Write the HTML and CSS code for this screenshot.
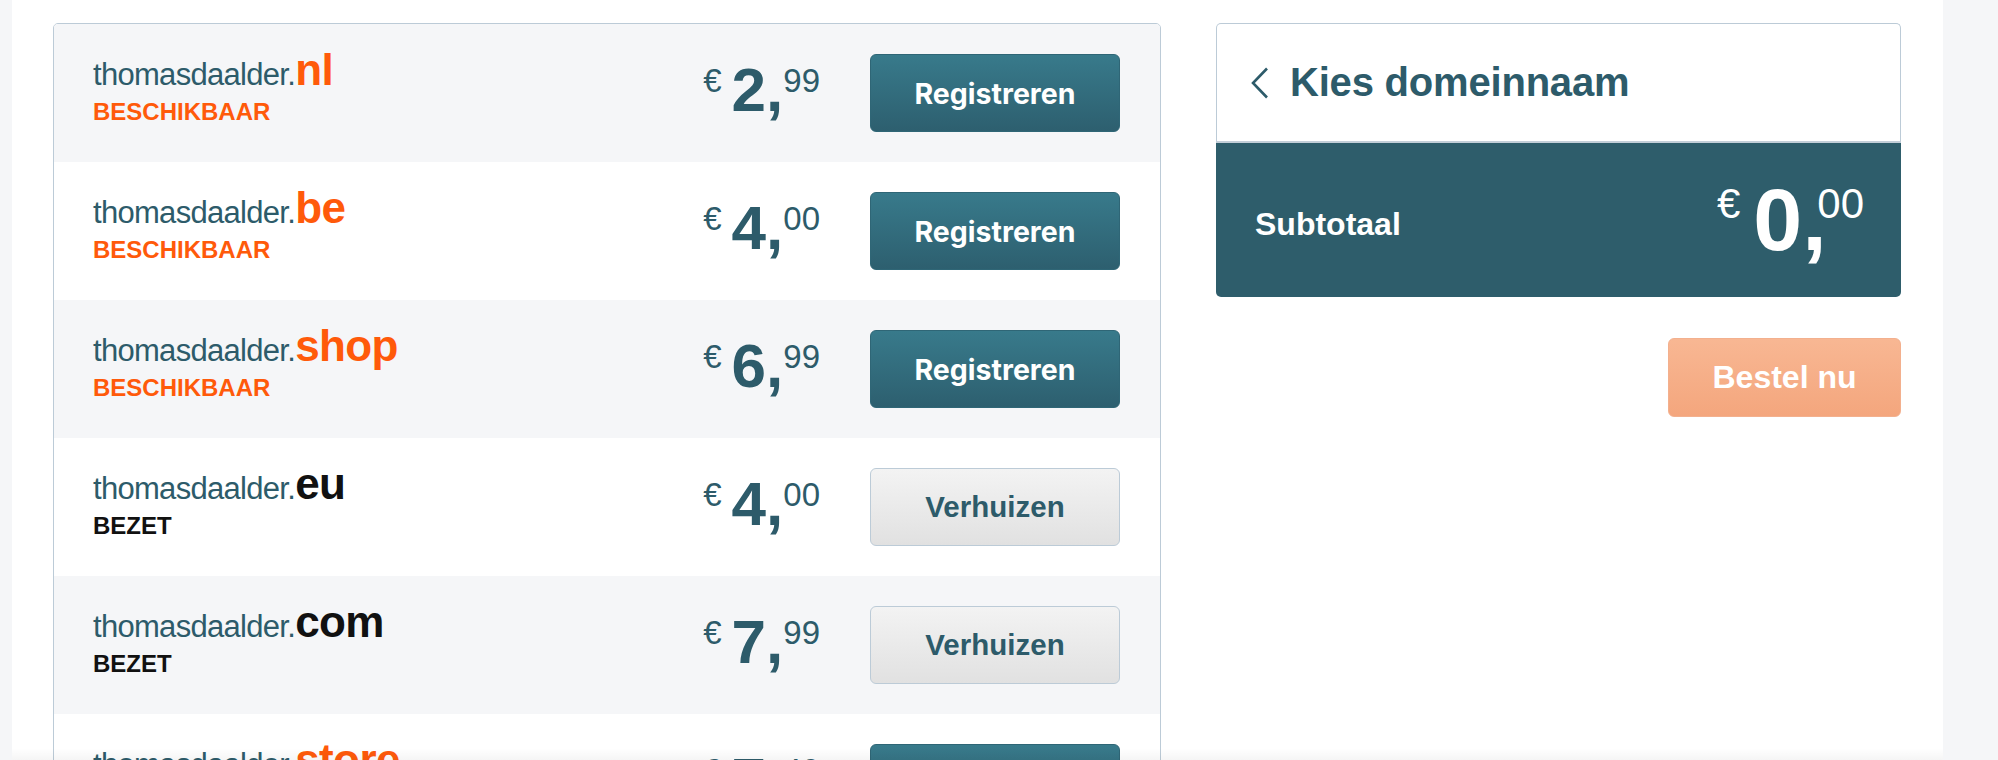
FILE: index.html
```html
<!DOCTYPE html>
<html lang="nl">
<head>
<meta charset="utf-8">
<title>Kies domeinnaam</title>
<link rel="stylesheet" href="styles.css">
</head>
<body>
<div class="page">
  <div class="main">
    <div class="content">
      <div class="domains">
        <div class="row alt">
          <div class="name"><div class="domain">thomasdaalder.<span class="tld free">nl</span></div><div class="status free">BESCHIKBAAR</div></div>
          <div class="price"><span class="cur">€</span><span class="int">2,</span><span class="dec">99</span></div>
          <button class="btn primary">Registreren</button>
        </div>
        <div class="row">
          <div class="name"><div class="domain">thomasdaalder.<span class="tld free">be</span></div><div class="status free">BESCHIKBAAR</div></div>
          <div class="price"><span class="cur">€</span><span class="int">4,</span><span class="dec">00</span></div>
          <button class="btn primary">Registreren</button>
        </div>
        <div class="row alt">
          <div class="name"><div class="domain">thomasdaalder.<span class="tld free">shop</span></div><div class="status free">BESCHIKBAAR</div></div>
          <div class="price"><span class="cur">€</span><span class="int">6,</span><span class="dec">99</span></div>
          <button class="btn primary">Registreren</button>
        </div>
        <div class="row">
          <div class="name"><div class="domain">thomasdaalder.<span class="tld taken">eu</span></div><div class="status taken">BEZET</div></div>
          <div class="price"><span class="cur">€</span><span class="int">4,</span><span class="dec">00</span></div>
          <button class="btn secondary">Verhuizen</button>
        </div>
        <div class="row alt">
          <div class="name"><div class="domain">thomasdaalder.<span class="tld taken">com</span></div><div class="status taken">BEZET</div></div>
          <div class="price"><span class="cur">€</span><span class="int">7,</span><span class="dec">99</span></div>
          <button class="btn secondary">Verhuizen</button>
        </div>
        <div class="row">
          <div class="name"><div class="domain">thomasdaalder.<span class="tld free">store</span></div><div class="status free">BESCHIKBAAR</div></div>
          <div class="price"><span class="cur">€</span><span class="int">7,</span><span class="dec">49</span></div>
          <button class="btn primary">Registreren</button>
        </div>
      </div>
      <div class="side">
        <div class="cart">
          <div class="cart-head">
            <svg class="back" width="20" height="32" viewBox="0 0 20 32" aria-hidden="true"><path d="M18 1.5 L4 16 L18 30.5" fill="none" stroke="#2d5b6a" stroke-width="2.6"/></svg>
            <span class="cart-title">Kies domeinnaam</span>
          </div>
          <div class="cart-total">
            <span class="sub-label">Subtotaal</span>
            <div class="total"><span class="cur">€</span><span class="int">0</span><span class="comma">,</span><span class="dec">00</span></div>
          </div>
        </div>
        <div class="actions"><button class="order">Bestel nu</button></div>
      </div>
    </div>
  </div>
</div>
</body>
</html>
```
FILE: styles.css
```css
* { box-sizing: border-box; }
html, body { margin: 0; padding: 0; height: 760px; overflow: hidden; }
body { font-family: "Liberation Sans", Arial, sans-serif; color: #2d5b6a; background: #f5f6f8; }

.page { display: flex; height: 760px; padding-left: 12px; }
.main {
  position: relative;
  width: 1931px;
  height: 760px;
  background: #fff;
  padding: 23px 42px 0 41px;
  overflow: hidden;
}
.main::after {
  content: "";
  position: absolute;
  left: 0; right: 0; bottom: 0;
  height: 12px;
  background: linear-gradient(rgba(0,0,0,0), rgba(0,0,0,0.04));
}
.content { display: flex; gap: 55px; align-items: flex-start; }

.domains {
  width: 1108px;
  border: 1px solid #bccbd7;
  border-radius: 5px 5px 0 0;
  overflow: hidden;
  flex: none;
}
.row {
  display: flex;
  align-items: center;
  height: 138px;
  padding: 0 40px 0 39px;
  background: #fff;
}
.row.alt { background: #f5f6f8; }
.name { flex: 1; }
.domain {
  font-size: 31px;
  line-height: 36px;
  letter-spacing: -0.7px;
  color: #2d5b6a;
  white-space: nowrap;
}
.tld { font-size: 44px; font-weight: 700; line-height: 0; letter-spacing: -0.6px; }
.free { color: #ff5a0a; }
.taken { color: #111; }
.status { font-size: 24px; font-weight: 700; line-height: 37px; }

.price {
  display: flex;
  align-items: flex-start;
  margin-right: 50px;
  margin-bottom: 6px;
  color: #2d5b6a;
}
.price .cur { font-size: 33px; line-height: 1; margin-top: 5px; margin-right: 10px; }
.price .int { font-size: 62px; font-weight: 700; line-height: 1; }
.price .dec { font-size: 33px; line-height: 1; margin-top: 5px; }

.btn {
  width: 250px;
  height: 78px;
  border-radius: 6px;
  cursor: pointer;
  padding: 0;
}
.btn.primary {
  font-family: "Inter", "Roboto", sans-serif;
  font-weight: 700;
  font-size: 28.5px;
  color: #fff;
  border: 1px solid #2f6676;
  background: linear-gradient(#387a8b, #2d5f6f);
}
.btn.secondary {
  font-family: "Liberation Sans", Arial, sans-serif;
  font-weight: 700;
  font-size: 29.5px;
  color: #2d5b6a;
  border: 1px solid #bccbd7;
  background: linear-gradient(#f3f3f3, #e1e1e1);
}

.side { width: 685px; flex: none; }
.cart { border-radius: 5px; }
.cart-head {
  display: flex;
  align-items: center;
  height: 120px;
  padding-left: 32px;
  border: 1px solid #bccbd7;
  border-bottom: 2px solid #c3ced8;
  border-radius: 5px 5px 0 0;
  background: #fff;
}
.back { display: block; margin-right: 21px; }
.cart-title { font-size: 40px; font-weight: 700; letter-spacing: -0.2px; color: #2d5b6a; }
.cart-total {
  display: flex;
  justify-content: space-between;
  align-items: center;
  height: 154px;
  padding: 0 37px 0 39px;
  background: #2e5d6b;
  border-radius: 0 0 5px 5px;
  color: #fff;
}
.sub-label { font-size: 32px; font-weight: 700; line-height: 1; margin-top: 8px; }
.total { display: flex; align-items: flex-start; }
.total .cur { font-size: 42px; line-height: 1; margin-top: 7px; margin-right: 13px; }
.total .int { font-size: 88px; font-weight: 700; line-height: 1; }
.total .comma { font-size: 88px; font-weight: 700; line-height: 1; width: 15px; overflow: visible; white-space: nowrap; }
.total .dec { font-size: 42px; line-height: 1; margin-top: 7px; }

.actions { display: flex; justify-content: flex-end; margin-top: 41px; }
.order {
  width: 233px;
  height: 79px;
  border: 1px solid #f3b08e;
  border-radius: 6px;
  background: linear-gradient(#f8b793, #f4a67d);
  color: #fff;
  font-family: "Liberation Sans", Arial, sans-serif;
  font-weight: 700;
  font-size: 32px;
  padding: 0;
  cursor: pointer;
}
```
